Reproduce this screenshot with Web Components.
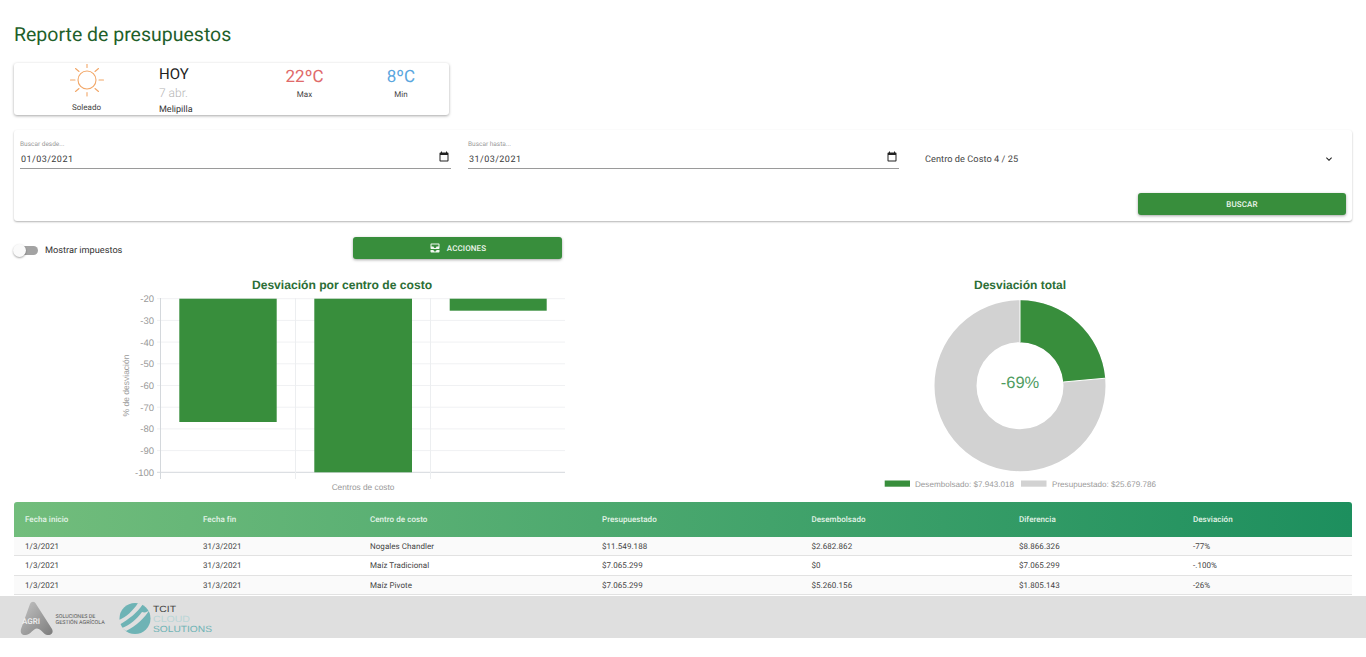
<!DOCTYPE html>
<html lang="es"><head><meta charset="utf-8"><title>Reporte de presupuestos</title>
<style>html,body{margin:0;background:#fff;font-family:Roboto,"Liberation Sans",sans-serif;text-rendering:geometricPrecision}</style></head>
<body>
<report-page></report-page>
<script>
function def(name, css, html){
  customElements.define(name, class extends HTMLElement{
    constructor(){super();const r=this.attachShadow({mode:'open'});
      const fn=typeof html==='function'?html(this):html;
      r.innerHTML='<style>'+css+'</style>'+fn;}
  });
}
const attr=(el,n,d='')=>el.getAttribute(n)||d;

def('date-field',`:host{display:block;position:relative;height:38px;border-bottom:1px solid #9a9a9a;color:#333}
.l{font-size:6.5px;color:#999;line-height:8px;padding-top:10px}
.v{font-size:9px;letter-spacing:.45px;line-height:12px;margin-top:6px;padding-left:1px;color:#3a3a3a}
svg{position:absolute;right:1px;top:21px}`,
el=>`<div class="l">${attr(el,'label')}</div><div class="v">${attr(el,'value')}</div>
<svg width="12" height="12" viewBox="0 0 24 24"><path fill="#222" d="M19 3h-1V1h-2v2H8V1H6v2H5C3.9 3 3 3.9 3 5v14c0 1.1.9 2 2 2h14c1.1 0 2-.9 2-2V5c0-1.1-.9-2-2-2zm0 16H5V8h14v11z"/></svg>`);

def('select-field',`:host{display:flex;align-items:center;justify-content:space-between;height:38px;padding:20px 11px 0 9px;box-sizing:border-box;font-size:9.2px;letter-spacing:.05px;color:#444}
svg{display:block}`,
el=>`<span><slot></slot></span><svg width="12" height="12" viewBox="0 0 24 24"><path fill="#222" d="M7.41 8.59 12 13.17l4.59-4.58L18 10l-6 6-6-6z"/></svg>`);

def('app-button',`:host{display:flex;align-items:center;justify-content:center;gap:6px;height:22px;background:#388e3c;color:#eef6ee;border-radius:3px;font-size:8px;font-weight:500;letter-spacing:.1px;box-shadow:0 1px 3px rgba(0,0,0,.35)}
svg{display:block}
.x{padding-top:1px}`,`<slot name="icon"></slot><span class="x"><slot></slot></span>`);

def('toggle-switch',`:host{display:flex;align-items:center;gap:7px;font-size:9.2px;color:#333;height:22px;padding-top:5px;box-sizing:border-box}
.t{width:24px;height:9px;border-radius:5px;background:#a3a3a3;position:relative;display:block;flex:none}
.k{position:absolute;left:-1px;top:-2.5px;width:13px;height:13px;border-radius:50%;background:#fafafa;box-shadow:0 1px 2px rgba(0,0,0,.35)}`,
`<span class="t"><span class="k"></span></span><slot></slot>`);

def('weather-card',`:host{display:grid;grid-template-columns:145px 97px 97px 96px;width:435px;height:52px;background:#fff;border-radius:3px;box-shadow:0 1px 3px rgba(0,0,0,.35);color:#222}
.c{display:flex;flex-direction:column;align-items:center}
.sun{padding-top:1px}
svg{display:block}
.so{font-size:8px;color:#444;margin-top:5px;line-height:10px}
.d{padding-top:2px}
.h{font-size:15px;line-height:18px;color:#222}
.a{font-size:12px;line-height:15px;color:#b5b5b5;margin-top:3px;font-weight:300}
.m{font-size:9px;line-height:11px;margin-top:4px;color:#333}
.t{font-size:17px;line-height:20px;padding-top:4px}
.s{font-size:8px;line-height:10px;margin-top:3px;color:#444}`,
`<div class="c sun"><svg width="36" height="34" viewBox="0 0 36 34" fill="none" stroke="#f2a768" stroke-width="1.1" stroke-linecap="round">
<circle cx="18" cy="16" r="9"/><path d="M18 0v3.5M18 28.5V32M1.5 16H6M30 16h4.500M6.500 4.500l3.500 3M29.500 4.500l-3.500 3M6.500 27.500l3.500-3M29.500 27.500l-3.500-3"/></svg><div class="so">Soleado</div></div>
<div class="d"><div class="h">HOY</div><div class="a">7 abr.</div><div class="m">Melipilla</div></div>
<div class="c"><div class="t" style="color:#e06a6a">22ºC</div><div class="s">Max</div></div>
<div class="c"><div class="t" style="color:#5aa6de">8ºC</div><div class="s">Min</div></div>`);

def('filter-panel',`:host{display:block;height:91px;background:#fff;border-radius:3px;box-shadow:0 1px 2px rgba(0,0,0,.3);padding:0 6px;box-sizing:border-box}
.g{display:grid;grid-template-columns:431px 431px 1fr;column-gap:17px}
.b{display:flex;justify-content:flex-end;margin-top:24px}
app-button{width:208px}`,
`<div class="g"><date-field label="Buscar desde..." value="01/03/2021"></date-field><date-field label="Buscar hasta..." value="31/03/2021"></date-field><select-field>Centro de Costo 4 / 25</select-field></div>
<div class="b"><app-button>BUSCAR</app-button></div>`);

const ticks=[-20,-30,-40,-50,-60,-70,-80,-90,-100];
const yOf=v=>298.7+(-20-v)*(472.3-298.7)/80;
def('bar-chart',`:host{display:block;width:569px;height:232px}svg{display:block;font-family:"Liberation Sans",Arial,sans-serif}`,
`<svg width="569" height="232" viewBox="14 270 569 232">
<text x="342" y="288.5" text-anchor="middle" font-size="12.1" font-weight="700" fill="#2c6e36">Desviación por centro de costo</text>
${ticks.map(v=>`<line x1="157" x2="565" y1="${yOf(v)}" y2="${yOf(v)}" stroke="${v==-100?'#d4d8dc':'#f0f1f3'}" stroke-width="1"/><text x="154" y="${yOf(v)+3.5}" text-anchor="end" font-size="9.5" fill="#9a9a9a">${v}</text>`).join('')}
<path d="M160.5 298v181" stroke="#d4d8dc"/><path d="M295.5 298v181M430.5 298v181" stroke="#eceef0"/>
<rect x="179.3" y="298.7" width="97.4" height="123.3" fill="#388e3c"/>
<rect x="314.3" y="298.7" width="97.7" height="173.6" fill="#388e3c"/>
<rect x="449.7" y="298.7" width="97" height="12" fill="#388e3c"/>
<text transform="translate(129 385.5) rotate(-90)" text-anchor="middle" font-size="8.5" fill="#9a9a9a">% de desviación</text>
<text x="363" y="490" text-anchor="middle" font-size="8.3" fill="#9a9a9a">Centros de costo</text>
</svg>`);

def('donut-chart',`:host{display:block;width:300px;height:232px}svg{display:block;font-family:"Liberation Sans",Arial,sans-serif}`,
`<svg width="300" height="232" viewBox="870 270 300 232">
<text x="1020" y="288.5" text-anchor="middle" font-size="12" font-weight="700" fill="#2c6e36">Desviación total</text>
<circle cx="1020" cy="385.7" r="64.5" fill="none" stroke="#d2d2d2" stroke-width="42"/>
<path d="M1020 300.2A85.5 85.5 0 0 1 1105.2 378.3L1063.3 382A43.5 43.5 0 0 0 1020 342.2Z" fill="#388e3c"/>
<path d="M1020 300v42M1105.4 378.2L1063.3 382" stroke="#fff" stroke-width="1"/>
<text x="1020" y="388" text-anchor="middle" font-size="16.5" fill="#4f9c5f">-69%</text>
<rect x="884.7" y="480.5" width="25.3" height="6.2" fill="#388e3c"/>
<text x="915" y="487" font-size="8.1" fill="#9a9a9a">Desembolsado: $7.943.018</text>
<rect x="1021" y="480.5" width="25.5" height="6.2" fill="#d2d2d2"/>
<text x="1052" y="487" font-size="8.1" fill="#9a9a9a">Presupuestado: $25.679.786</text>
</svg>`);

const cols='178px 167px 232px 209.5px 207.5px 174px 1fr';
const head=['Fecha inicio','Fecha fin','Centro de costo','Presupuestado','Desembolsado','Diferencia','Desviación'];
const rows=[
['1/3/2021','31/3/2021','Nogales Chandler','$11.549.188','$2.682.862','$8.866.326','-77%'],
['1/3/2021','31/3/2021','Maíz Tradicional','$7.065.299','$0','$7.065.299','-.100%'],
['1/3/2021','31/3/2021','Maíz Pivote','$7.065.299','$5.260.156','$1.805.143','-26%']];
def('data-table',`:host{display:block;font-size:8px;letter-spacing:.05px;color:#444;height:93.5px;overflow:hidden}
.r{display:grid;grid-template-columns:${cols};padding-left:11px;align-items:center}
.r span{padding-top:1px}
.h{height:34.5px;background:linear-gradient(90deg,#72bd7c,#1d8f5e);color:#e4f4e8;font-weight:500;border-radius:3px 3px 0 0}
.b{height:19.5px;box-sizing:border-box;border-bottom:1px solid #e2e2e2}
.b:nth-child(odd){background:#fafafa}`,
`<div class="r h">${head.map(t=>`<span>${t}</span>`).join('')}</div>
${rows.map(r=>`<div class="r b">${r.map(t=>`<span>${t}</span>`).join('')}</div>`).join('')}`);

def('app-footer',`:host{display:flex;align-items:center;height:42px;background:#dfdfdf;padding-left:18px;box-sizing:border-box}
svg{display:block}`,
`<svg width="200" height="42" viewBox="18 596 200 42">
<defs><linearGradient id="ag" x1="0" x2="1" y1="0" y2="1"><stop offset="0" stop-color="#c4c4c4"/><stop offset="1" stop-color="#7c7c7c"/></linearGradient></defs>
<path d="M30 604c1.500-3 4.500-3 6 0l16 25c2 4-1 6.500-5 6-4-.5-5-6-10-6.500-4 0-6 6-11 6.500-4 .5-6-2-5-6z" fill="url(#ag)"/>
<text x="22" y="623.500" font-size="8" fill="#f0f0f0" font-weight="500" font-family="Roboto,sans-serif">AGRI</text>
<text x="55.500" y="617.500" font-size="5.400" fill="#555" font-family="Roboto,sans-serif">SOLUCIONES DE</text>
<text x="55.500" y="623.500" font-size="5.400" fill="#555" font-family="Roboto,sans-serif">GESTIÓN AGRÍCOLA</text>
<circle cx="135" cy="618.500" r="15.500" fill="#6eb3b5"/>
<path d="M119 620c7-3 14-9 19-17l5 1c-6 9-14 15-24 21zM122 628c8-3 15-9 20-16 3 1 6 0 8-3-5 9-14 17-24 22z" fill="#dfdfdf"/>
<g font-family="'Liberation Sans',sans-serif" font-size="9">
<text x="153" y="612" fill="#444" textLength="23" lengthAdjust="spacingAndGlyphs">TCIT</text>
<text x="153" y="621.800" fill="#b9d6d7" textLength="37" lengthAdjust="spacingAndGlyphs">CLOUD</text>
<text x="153" y="631.600" fill="#6eb3b5" textLength="59" lengthAdjust="spacingAndGlyphs">SOLUTIONS</text>
</g>
</svg>`);

def('report-page',`:host{display:block;height:638px;overflow:hidden}
.m{padding:0 14px;height:596px;overflow:hidden;box-sizing:border-box}
h1{font-size:19.5px;font-weight:400;color:#1f5f2a;margin:0;padding-top:23px;line-height:24px}
weather-card{margin-top:16px}
filter-panel{margin-top:15px}
.t{display:flex;margin-top:16px;margin-bottom:11px}
toggle-switch{width:339px}
app-button{width:209px}
.c{display:flex;gap:287px}`,
`<div class="m"><h1>Reporte de presupuestos</h1>
<weather-card></weather-card>
<filter-panel></filter-panel>
<div class="t"><toggle-switch>Mostrar impuestos</toggle-switch>
<app-button><svg slot="icon" width="12" height="12" viewBox="0 0 24 24"><path fill="#f2f8f2" d="M19 3H5c-1.1 0-2 .9-2 2v7c0 1.1.9 2 2 2h14c1.1 0 2-.9 2-2V5c0-1.1-.9-2-2-2zm0 6h-4c0 1.62-1.38 3-3 3s-3-1.38-3-3H5V5h14v4zm-4 7h6v3c0 1.1-.9 2-2 2H5c-1.1 0-2-.9-2-2v-3h6c0 1.66 1.34 3 3 3s3-1.34 3-3z"/></svg>ACCIONES</app-button></div>
<div class="c"><bar-chart></bar-chart><donut-chart></donut-chart></div>
<data-table></data-table></div>
<app-footer></app-footer>`);
</script>
</body></html>
